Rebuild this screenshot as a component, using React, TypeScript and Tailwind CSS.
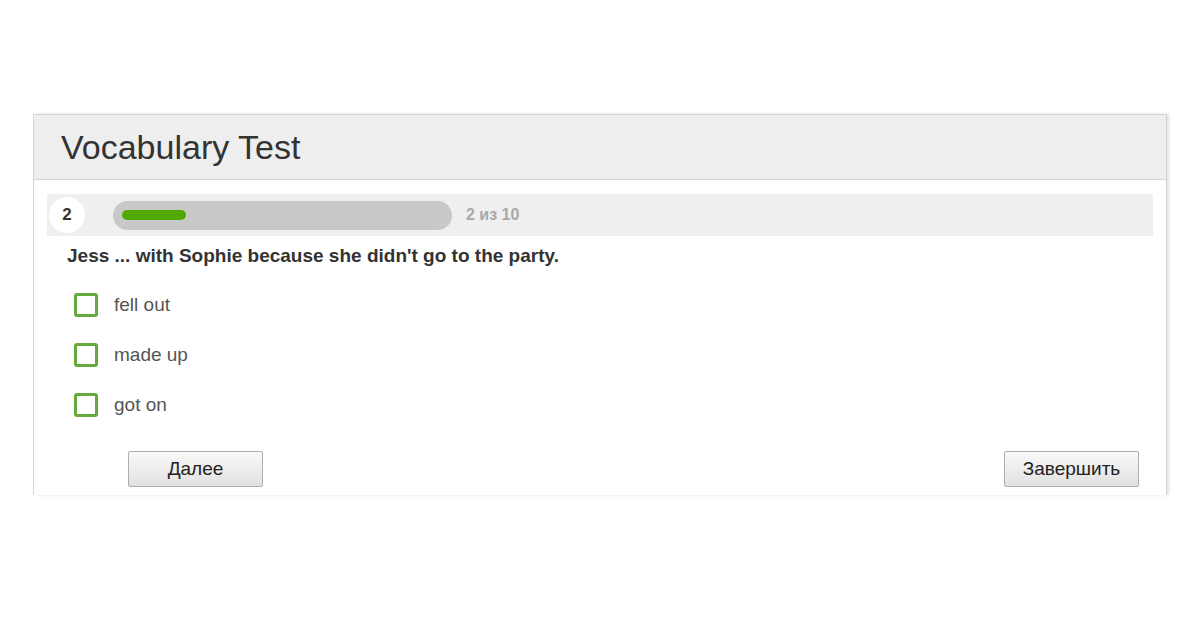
import { useState } from "react";

const options = ["fell out", "made up", "got on"];

export default function App() {
  const [checked, setChecked] = useState<number[]>([]);
  const current = 2;
  const total = 10;

  const toggle = (i: number) =>
    setChecked((prev) => (prev.includes(i) ? prev.filter((x) => x !== i) : [...prev, i]));

  return (
    <div className="w-[1200px] h-[630px] bg-white font-['Liberation_Sans',Arial,sans-serif]">
      <div className="pt-[114px] px-[33px]">
        <div className="h-[381px] border border-b-0 border-[#d4d4d4] bg-white shadow-[2px_0_3px_rgba(0,0,0,0.12)]">
          {/* header */}
          <div className="h-[65px] bg-[#eeeeee] border-b border-[#d4d4d4] flex items-center pl-[27px]">
            <h1 className="text-[34px] text-[#333] leading-none">Vocabulary Test</h1>
          </div>

          <div className="px-[13px] pt-[14px]">
            {/* progress */}
            <div className="h-[42px] bg-[#efefef] flex items-center">
              <div className="w-[36px] h-[36px] ml-[2px] rounded-full bg-white flex items-center justify-center text-[17px] font-bold text-[#333]">
                {current}
              </div>
              <div className="ml-[28px] w-[339px] h-[29px] rounded-full bg-[#c8c8c8] flex items-center px-[9px]">
                <div className="h-[10px] rounded-full bg-[#50a800]" style={{ width: `${(current / total) * 320}px` }} />
              </div>
              <span className="ml-[14px] text-[16px] font-bold text-[#a8a8a8]">
                {current} из {total}
              </span>
            </div>

            {/* question */}
            <p className="mt-[9px] pl-[20px] text-[19px] leading-[22px] font-bold text-[#333]">
              Jess ... with Sophie because she didn't go to the party.
            </p>

            <div className="mt-[26px] pl-[27px] flex flex-col gap-[26px]">
              {options.map((o, i) => (
                <label key={o} className="flex items-center h-[24px] cursor-pointer" onClick={() => toggle(i)}>
                  <span className="w-[24px] h-[24px] border-[3px] border-[#63a93b] rounded-[3px] flex items-center justify-center">
                    {checked.includes(i) && <span className="w-[10px] h-[10px] bg-[#63a93b]" />}
                  </span>
                  <span className="ml-[16px] text-[19px] leading-[24px] text-[#555]">{o}</span>
                </label>
              ))}
            </div>

            {/* buttons */}
            <div className="mt-[34px] flex justify-between pl-[81px] pr-[14px]">
              <button className="w-[135px] h-[36px] border border-[#adadad] rounded-[2px] bg-gradient-to-b from-[#f9f9f9] to-[#e1e1e1] text-[19px] text-[#222]">
                Далее
              </button>
              <button className="w-[135px] h-[36px] border border-[#adadad] rounded-[2px] bg-gradient-to-b from-[#f9f9f9] to-[#e1e1e1] text-[19px] text-[#222]">
                Завершить
              </button>
            </div>
          </div>
        </div>
      </div>
    </div>
  );
}
